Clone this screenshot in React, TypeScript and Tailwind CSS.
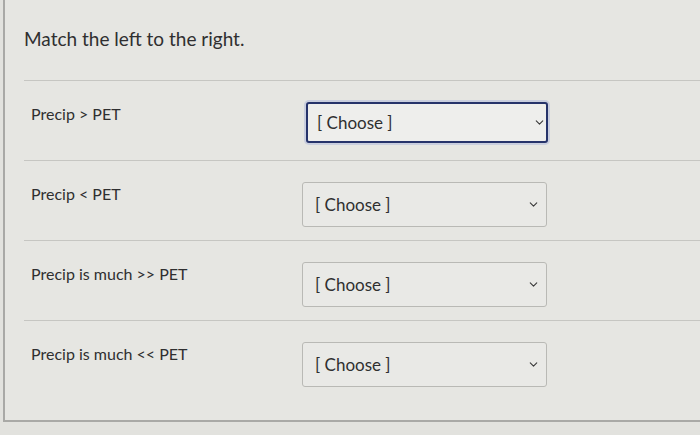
import { ChevronDown } from "lucide-react";

const rows = [
  { label: "Precip > PET", focused: true },
  { label: "Precip < PET" },
  { label: "Precip is much >> PET" },
  { label: "Precip is much << PET" },
];

export default function App() {
  return (
    <main
      className="h-[435px] w-[700px] overflow-hidden bg-[#e2e2de] text-[#2f2f30]"
      style={{ fontFamily: "Lato, 'Noto Sans', sans-serif" }}
    >
      <div className="ml-[3px] h-[422px] border-b-2 border-l-2 border-[#a9a9a6] bg-[#e6e6e2] pl-[19px]">
        <h1 className="pt-[27px] text-[19px] leading-[24px]">Match the left to the right.</h1>
        <div className="mt-[29px]">
          {rows.map((r) => (
            <div
              key={r.label}
              className="flex h-[80px] border-t border-[#c6c6c2] pt-[21px]"
            >
              <div className="w-[278px] pl-[7px] pt-[2px] text-[16px] leading-[20px]">{r.label}</div>
              <div
                className={
                  r.focused
                    ? "ml-[4px] flex h-[41px] w-[242px] items-center justify-between rounded-[3px] border-2 border-[#26336a] bg-[#eeeeec] pl-[9px] pr-0 shadow-[0_0_0_2px_#c9cede]"
                    : "flex h-[45px] w-[245px] items-center justify-between rounded-[3px] border border-[#b9b9b5] bg-[#e9e9e6] pl-[12px] pr-[6px]"
                }
              >
                <span className="text-[17px] leading-[20px]">[ Choose ]</span>
                <ChevronDown size={13} strokeWidth={2} className="text-[#3a3a3a]" />
              </div>
            </div>
          ))}
        </div>
      </div>
    </main>
  );
}
